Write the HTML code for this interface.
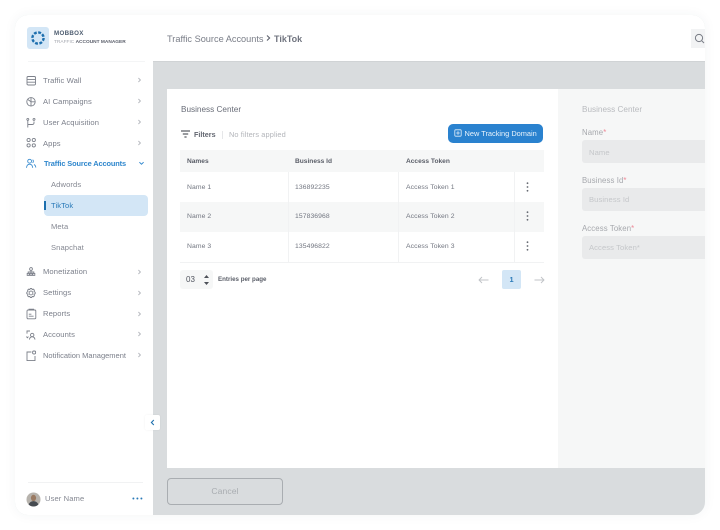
<!DOCTYPE html>
<html><head><meta charset="utf-8">
<style>
html,body{margin:0;padding:0;background:#fff;}
body{width:720px;height:530px;overflow:hidden;position:relative;font-family:"Liberation Sans",sans-serif;color:#6b6f7b;}
.a{position:absolute;white-space:nowrap;}
#app{position:absolute;left:15px;top:15px;width:690px;height:500px;border-radius:13px;overflow:hidden;background:#d9dcde;box-shadow:0 0 12px rgba(40,50,70,.05);}
#page{position:absolute;left:0;top:0;width:720px;height:530px;filter:blur(.3px);}
.t{font-size:7.6px;line-height:10px;letter-spacing:.1px;}
.nav{left:43px;color:#7b7f8a;}
.chev{position:absolute;left:137px;width:5px;height:8px;}
.ic{position:absolute;left:25px;width:12px;height:12px;fill:none;stroke:#7c808a;stroke-width:.9;}
.line{position:absolute;background:#f1f2f3;}
.cell{font-size:6.8px;line-height:9px;color:#727680;letter-spacing:.08px;}
.hd{font-size:6.6px;line-height:9px;font-weight:bold;color:#5a5e68;letter-spacing:0;}
.dots{position:absolute;left:526px;width:3px;height:10px;}
.lab{font-size:7.8px;line-height:10px;color:#a6a8ad;letter-spacing:.1px;}
.lab b{color:#ee8a98;font-weight:normal;}
.inp{position:absolute;left:582px;width:123px;height:23px;background:#e9eaeb;border-radius:3px 0 0 3px;}
.ph{font-size:7.6px;line-height:10px;color:#c5c7ca;left:589px;letter-spacing:.1px;}
</style></head>
<body>
<div id="app"></div>
<div id="page">
<!-- sidebar -->
<div class="a" style="left:15px;top:15px;width:138px;height:500px;background:#fff;border-radius:13px 0 0 13px;"></div>
<!-- header -->
<div class="a" style="left:153px;top:15px;width:552px;height:46px;background:#fff;border-radius:0 13px 0 0;border-bottom:1px solid #d0d3d5;box-sizing:content-box;"></div>
<div class="a" style="left:167px;top:32.5px;font-size:9.2px;line-height:12px;color:#7a7e88;letter-spacing:0;">Traffic Source Accounts</div>
<svg class="a" style="left:266px;top:35px" width="5" height="6" viewBox="0 0 5 6"><path d="M1 .5 3.6 3 1 5.5" fill="none" stroke="#5a5e6a" stroke-width="1.1"/></svg>
<div class="a" style="left:274px;top:32.5px;font-size:9px;line-height:12px;font-weight:bold;color:#70747f;letter-spacing:0;">TikTok</div>
<div class="a" style="left:691px;top:29px;width:14px;height:19px;background:#f2f3f4;"></div>
<svg class="a" style="left:694px;top:33px" width="11" height="11" viewBox="0 0 11 11"><circle cx="5" cy="5" r="3.6" fill="none" stroke="#777b84" stroke-width="1"/><path d="M7.8 7.8 10 10" stroke="#777b84" stroke-width="1"/></svg>

<!-- logo -->
<div class="a" style="left:27px;top:27px;width:22px;height:22px;background:#d3e6f6;border-radius:3px;"></div>
<svg class="a" style="left:27px;top:27px" width="22" height="22" viewBox="0 0 22 22"><circle cx="11" cy="11" r="5.6" fill="none" stroke="#1d6fae" stroke-width="2.4" stroke-dasharray="2.9 1.5"/></svg>
<div class="a" style="left:54px;top:29.5px;font-size:6.2px;line-height:8px;font-weight:bold;color:#4e5d70;letter-spacing:.3px;">MOBBOX</div>
<div class="a" style="left:54px;top:39px;font-size:4.8px;line-height:7px;color:#a5a8b0;letter-spacing:0;">TRAFFIC <span style="color:#5c606c;font-weight:bold;">ACCOUNT MANAGER</span></div>
<div class="line" style="left:28px;top:61px;width:117px;height:1px;background:#f4f5f6;"></div>

<!-- nav icons -->
<svg class="ic" style="top:75px" viewBox="0 0 12 12"><rect x="2" y="1.5" width="8.5" height="8.5" rx="1.2"/><path d="M2 4.4h8.5M2 7.2h8.5"/></svg>
<svg class="ic" style="top:96px" viewBox="0 0 12 12"><circle cx="6" cy="5.8" r="4.2"/><path d="M6 1.6v8.4M6 5.8 3 3.6M6 5.8h4"/></svg>
<svg class="ic" style="top:117px" viewBox="0 0 12 12"><circle cx="2.8" cy="2.4" r="1"/><circle cx="9" cy="2.4" r="1"/><path d="M2.8 3.5v7M2.8 7.5h4.5q1.7 0 1.7-1.7V4.5"/></svg>
<svg class="ic" style="top:137px" viewBox="0 0 12 12"><circle cx="3.6" cy="3" r="1.6"/><circle cx="8.8" cy="3" r="1.6"/><circle cx="3.6" cy="8.4" r="1.6"/><circle cx="8.8" cy="8.4" r="1.6"/></svg>
<svg class="ic" style="top:158px;stroke:#3b8dd0" viewBox="0 0 12 12"><circle cx="4.6" cy="3.2" r="1.9"/><path d="M1.5 9.8q.4-3.6 3.1-3.6t3.1 3.6M7.6 1.8a1.8 1.8 0 0 1 0 3M9 6.5q1.6.8 1.8 3"/></svg>
<svg class="ic" style="top:266px" viewBox="0 0 12 12"><circle cx="6" cy="3" r="1.4"/><rect x="2.2" y="7.4" width="2" height="2"/><rect x="7.8" y="7.4" width="2" height="2"/><rect x="5" y="7.4" width="2" height="2"/><path d="M6 4.4v3M3.2 7.4V6h5.6v1.4"/></svg>
<svg class="ic" style="top:287px" viewBox="0 0 12 12"><path d="M6.7 1.4 7.2 2.6 8.5 2.2 9.4 3.2 9 4.4 10.2 5.3 10.2 6.7 9 7.4 9.4 8.8 8.5 9.7 7.2 9.4 6.7 10.6H5.3L4.8 9.4 3.5 9.7 2.6 8.8 3 7.4 1.8 6.7V5.3L3 4.4 2.6 3.2 3.5 2.2 4.8 2.6 5.3 1.4Z"/><circle cx="6" cy="6" r="1.9"/></svg>
<svg class="ic" style="top:308px" viewBox="0 0 12 12"><rect x="2" y="2" width="8.8" height="8.8" rx="1"/><path d="M4 2V1.2h4.6V2M3.8 6.2h2.6M3.8 8.2h4.8"/></svg>
<svg class="ic" style="top:329px" viewBox="0 0 12 12"><circle cx="7.2" cy="6" r="1.7"/><path d="M4.4 10.6q.4-2.8 2.8-2.8t2.8 2.8M2 4.6V2h3M1.4 7.6l1 1.2 1-1.2"/></svg>
<svg class="ic" style="top:350px" viewBox="0 0 12 12"><path d="M6.4 2H2v8.6h8V6"/><rect x="7.6" y="1" width="3" height="3" rx="1.2"/></svg>

<!-- nav text -->
<div class="a t nav" style="top:76px">Traffic Wall</div>
<div class="a t nav" style="top:97px">AI Campaigns</div>
<div class="a t nav" style="top:118px">User Acquisition</div>
<div class="a t nav" style="top:139px">Apps</div>
<div class="a t nav" style="left:44px;top:159px;color:#2f87cd;font-weight:bold;font-size:7.4px;letter-spacing:-.12px;">Traffic Source Accounts</div>
<div class="a t" style="left:51px;top:180px;color:#858892">Adwords</div>
<div class="a" style="left:44px;top:195px;width:104px;height:21px;background:#d3e6f6;border-radius:4px;"></div>
<div class="a" style="left:44px;top:201px;width:1.5px;height:9px;background:#1d6fae;"></div>
<div class="a t" style="left:51px;top:201px;color:#2a7ab8">TikTok</div>
<div class="a t" style="left:51px;top:222px;color:#858892">Meta</div>
<div class="a t" style="left:51px;top:243px;color:#858892">Snapchat</div>
<div class="a t nav" style="top:267px">Monetization</div>
<div class="a t nav" style="top:288px">Settings</div>
<div class="a t nav" style="top:309px">Reports</div>
<div class="a t nav" style="top:330px">Accounts</div>
<div class="a t nav" style="top:351px;letter-spacing:0;font-size:7.5px;">Notification Management</div>

<!-- chevrons -->
<svg class="chev" style="top:76px" viewBox="0 0 5 8"><path d="M1.4 2 3.4 4 1.4 6" fill="none" stroke="#b8bbc1"/></svg>
<svg class="chev" style="top:97px" viewBox="0 0 5 8"><path d="M1.4 2 3.4 4 1.4 6" fill="none" stroke="#b8bbc1"/></svg>
<svg class="chev" style="top:118px" viewBox="0 0 5 8"><path d="M1.4 2 3.4 4 1.4 6" fill="none" stroke="#b8bbc1"/></svg>
<svg class="chev" style="top:139px" viewBox="0 0 5 8"><path d="M1.4 2 3.4 4 1.4 6" fill="none" stroke="#b8bbc1"/></svg>
<svg class="a" style="left:138px;top:161px" width="7" height="5" viewBox="0 0 7 5"><path d="M1.4 1.2l2.1 2 2.1-2" fill="none" stroke="#2f87cd" stroke-width="1"/></svg>
<svg class="chev" style="top:268px" viewBox="0 0 5 8"><path d="M1.4 2 3.4 4 1.4 6" fill="none" stroke="#b8bbc1"/></svg>
<svg class="chev" style="top:289px" viewBox="0 0 5 8"><path d="M1.4 2 3.4 4 1.4 6" fill="none" stroke="#b8bbc1"/></svg>
<svg class="chev" style="top:310px" viewBox="0 0 5 8"><path d="M1.4 2 3.4 4 1.4 6" fill="none" stroke="#b8bbc1"/></svg>
<svg class="chev" style="top:330px" viewBox="0 0 5 8"><path d="M1.4 2 3.4 4 1.4 6" fill="none" stroke="#b8bbc1"/></svg>
<svg class="chev" style="top:351px" viewBox="0 0 5 8"><path d="M1.4 2 3.4 4 1.4 6" fill="none" stroke="#b8bbc1"/></svg>

<!-- collapse -->
<div class="a" style="left:145px;top:415px;width:15px;height:15px;background:#fff;border-radius:2px;box-shadow:0 0 2px rgba(0,0,0,.06);"></div>
<svg class="a" style="left:150px;top:419px" width="5" height="7" viewBox="0 0 5 7"><path d="M3.8 1 1.4 3.5 3.8 6" fill="none" stroke="#1d6fae" stroke-width="1.1"/></svg>

<!-- user -->
<div class="line" style="left:28px;top:482px;width:115px;height:1px;"></div>
<svg class="a" style="left:26px;top:492px" width="15" height="15" viewBox="0 0 15 15"><circle cx="7.5" cy="7.5" r="7" fill="#b7b3ad"/><ellipse cx="7.5" cy="6" rx="2.6" ry="3.2" fill="#9a7a62"/><path d="M2.6 12.5q1.4-3.4 4.9-3.4t4.9 3.4q-2 2-4.9 2t-4.9-2Z" fill="#454a50"/></svg>
<div class="a t" style="left:45px;top:494px;color:#858892">User Name</div>
<svg class="a" style="left:132px;top:497px" width="11" height="3" viewBox="0 0 11 3"><circle cx="1.4" cy="1.5" r="1" fill="#2a7ab8"/><circle cx="5.4" cy="1.5" r="1" fill="#2a7ab8"/><circle cx="9.4" cy="1.5" r="1" fill="#2a7ab8"/></svg>

<!-- card -->
<div class="a" style="left:167px;top:89px;width:391px;height:379px;background:#fff;"></div>
<div class="a" style="left:558px;top:89px;width:147px;height:379px;background:#f6f7f7;"></div>

<div class="a" style="left:181px;top:104px;font-size:8.2px;line-height:11px;color:#696d78;letter-spacing:0;">Business Center</div>
<svg class="a" style="left:180px;top:130px" width="11" height="9" viewBox="0 0 11 9"><path d="M1 1h9M2.8 4h5.4M4.4 7h2.2" stroke="#33373f" stroke-width="1.1" fill="none"/></svg>
<div class="a" style="left:194px;top:130px;font-size:7.2px;line-height:10px;font-weight:bold;color:#61656f;">Filters</div>
<div class="a" style="left:222px;top:131px;width:1px;height:8px;background:#e6e7e9;"></div>
<div class="a" style="left:229px;top:130px;font-size:7.4px;line-height:10px;color:#b3b5ba;letter-spacing:.1px;">No filters applied</div>

<div class="a" style="left:448px;top:124px;width:95px;height:19px;background:#2a82cf;border-radius:5px;"></div>
<svg class="a" style="left:454px;top:129px" width="8" height="8" viewBox="0 0 8 8"><rect x=".8" y=".8" width="6.4" height="6.4" rx=".8" fill="none" stroke="#e4f0fa" stroke-width=".8"/><path d="M4 2.2v3.6M2.2 4h3.6" stroke="#e4f0fa" stroke-width=".8"/></svg>
<div class="a" style="left:464.5px;top:128px;font-size:7.4px;line-height:11px;color:#e9f3fb;letter-spacing:0;">New Tracking Domain</div>

<!-- table -->
<div class="a" style="left:180px;top:150px;width:364px;height:22px;background:#f6f7f7;"></div>
<div class="a" style="left:180px;top:202px;width:364px;height:30px;background:#f6f7f7;"></div>
<div class="line" style="left:288px;top:172px;width:1px;height:90px;"></div>
<div class="line" style="left:398px;top:172px;width:1px;height:90px;"></div>
<div class="line" style="left:514px;top:172px;width:1px;height:90px;"></div>
<div class="line" style="left:180px;top:262px;width:364px;height:1px;"></div>
<div class="a hd" style="left:187px;top:156.5px">Names</div>
<div class="a hd" style="left:295px;top:156.5px">Business Id</div>
<div class="a hd" style="left:406px;top:156.5px">Access Token</div>

<div class="a cell" style="left:187px;top:183px">Name 1</div>
<div class="a cell" style="left:295px;top:183px">136892235</div>
<div class="a cell" style="left:406px;top:183px">Access Token 1</div>
<div class="a cell" style="left:187px;top:212px">Name 2</div>
<div class="a cell" style="left:295px;top:212px">157836968</div>
<div class="a cell" style="left:406px;top:212px">Access Token 2</div>
<div class="a cell" style="left:187px;top:242px">Name 3</div>
<div class="a cell" style="left:295px;top:242px">135496822</div>
<div class="a cell" style="left:406px;top:242px">Access Token 3</div>

<svg class="dots" style="top:182px" viewBox="0 0 3 10"><circle cx="1.5" cy="1.2" r=".9" fill="#666a72"/><circle cx="1.5" cy="5" r=".9" fill="#666a72"/><circle cx="1.5" cy="8.8" r=".9" fill="#666a72"/></svg>
<svg class="dots" style="top:211px" viewBox="0 0 3 10"><circle cx="1.5" cy="1.2" r=".9" fill="#666a72"/><circle cx="1.5" cy="5" r=".9" fill="#666a72"/><circle cx="1.5" cy="8.8" r=".9" fill="#666a72"/></svg>
<svg class="dots" style="top:241px" viewBox="0 0 3 10"><circle cx="1.5" cy="1.2" r=".9" fill="#666a72"/><circle cx="1.5" cy="5" r=".9" fill="#666a72"/><circle cx="1.5" cy="8.8" r=".9" fill="#666a72"/></svg>

<!-- pagination -->
<div class="a" style="left:180px;top:270px;width:33px;height:19px;background:#f6f7f7;border-radius:3px;"></div>
<div class="a" style="left:186px;top:275px;font-size:8px;line-height:10px;color:#50545e;">03</div>
<svg class="a" style="left:203px;top:274px" width="7" height="12" viewBox="0 0 7 12"><path d="M3.5 1 6 4H1ZM3.5 11 6 8H1Z" fill="#4d5159"/></svg>
<div class="a" style="left:218px;top:275px;font-size:6.2px;line-height:10px;font-weight:bold;color:#5a5e68;letter-spacing:0;">Entries per page</div>
<svg class="a" style="left:478px;top:276px" width="11" height="8" viewBox="0 0 11 8"><path d="M10.5 4H1M4 1 1 4l3 3" fill="none" stroke="#c0c3c7" stroke-width=".9"/></svg>
<div class="a" style="left:502px;top:270px;width:19px;height:19px;background:#d3e6f6;border-radius:2px;"></div>
<div class="a" style="left:502px;top:275px;width:19px;text-align:center;font-size:7.4px;line-height:10px;font-weight:bold;color:#2a7ab8;">1</div>
<svg class="a" style="left:534px;top:276px" width="11" height="8" viewBox="0 0 11 8"><path d="M.5 4H10M7 1l3 3-3 3" fill="none" stroke="#c0c3c7" stroke-width=".9"/></svg>

<!-- right form -->
<div class="a" style="left:582px;top:104px;font-size:8.2px;line-height:11px;color:#b9bbbf;letter-spacing:0;">Business Center</div>
<div class="a lab" style="left:582px;top:128px">Name<b>*</b></div>
<div class="inp" style="top:140px"></div>
<div class="a ph" style="top:148px">Name</div>
<div class="a lab" style="left:582px;top:176px">Business Id<b>*</b></div>
<div class="inp" style="top:188px"></div>
<div class="a ph" style="top:195px">Business Id</div>
<div class="a lab" style="left:582px;top:224px">Access Token<b>*</b></div>
<div class="inp" style="top:236px"></div>
<div class="a ph" style="top:243px">Access Token*</div>

<!-- cancel -->
<div class="a" style="left:167px;top:478px;width:116px;height:27px;box-sizing:border-box;border:1px solid #a9adb1;border-radius:4px;"></div>
<div class="a" style="left:167px;top:486px;width:116px;text-align:center;font-size:8.6px;line-height:11px;color:#a9adb1;letter-spacing:.1px;">Cancel</div>
</div>
</body></html>
